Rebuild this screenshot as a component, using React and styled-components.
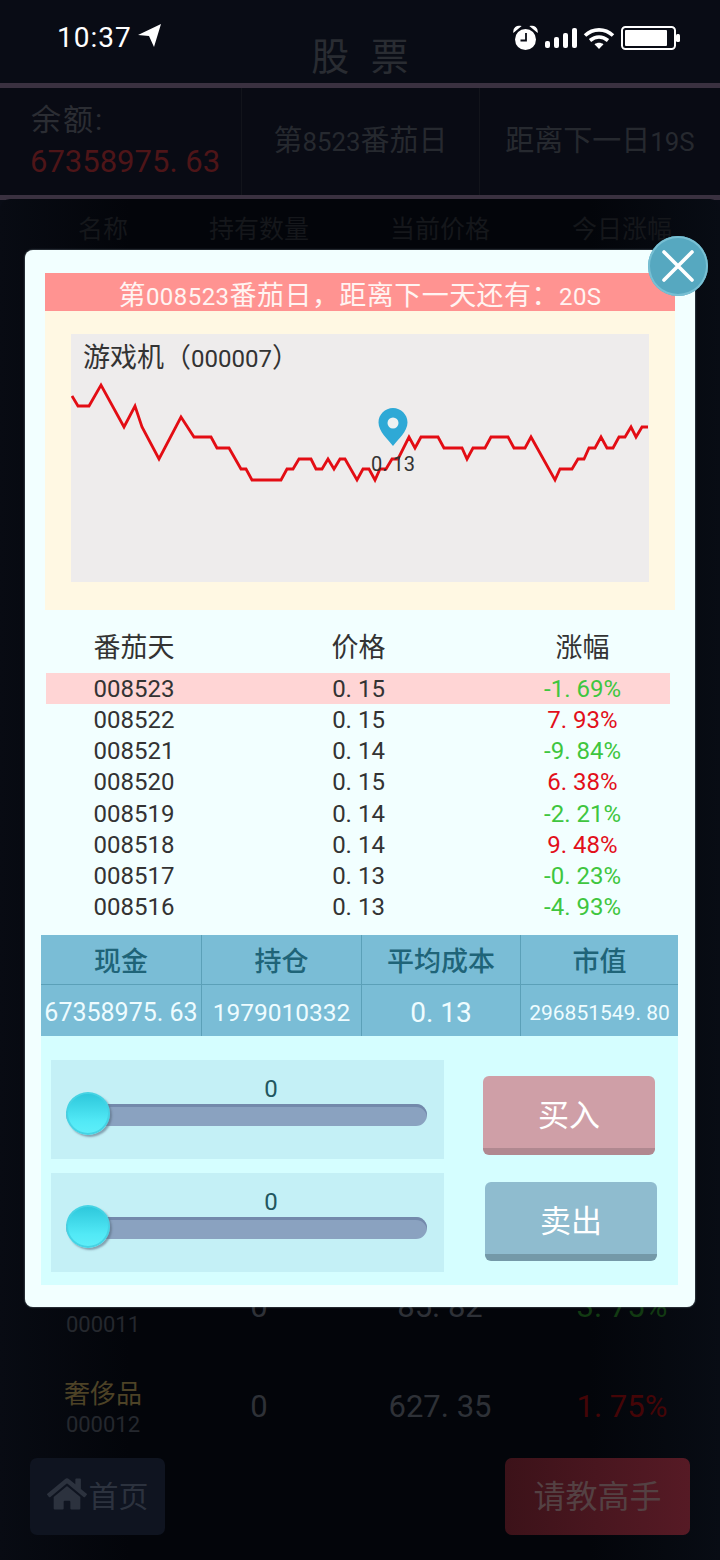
import React from 'react'
import styled, { createGlobalStyle } from 'styled-components'
import { FaHome } from 'react-icons/fa'

const history = [
  { day: '008523', price: '0. 15', change: '-1. 69%', up: false },
  { day: '008522', price: '0. 15', change: '7. 93%', up: true },
  { day: '008521', price: '0. 14', change: '-9. 84%', up: false },
  { day: '008520', price: '0. 15', change: '6. 38%', up: true },
  { day: '008519', price: '0. 14', change: '-2. 21%', up: false },
  { day: '008518', price: '0. 14', change: '9. 48%', up: true },
  { day: '008517', price: '0. 13', change: '-0. 23%', up: false },
  { day: '008516', price: '0. 13', change: '-4. 93%', up: false },
]

// traced from the chart, in panel pixels
const linePoints = [
  [1, 62], [7, 72], [18, 72], [30, 51], [53, 93], [64, 72], [71, 93], [88, 125], [110, 83], [123, 103],
  [140, 103], [146, 114], [158, 114], [170, 135], [175, 135], [181, 146], [210, 146], [216, 135], [222, 135],
  [228, 125], [240, 125], [245, 135], [251, 135], [257, 125], [263, 135], [269, 125], [274, 125], [286, 146],
  [292, 135], [298, 135], [304, 146], [309, 135], [315, 135], [321, 125], [327, 125], [338, 103], [344, 114],
  [350, 103], [367, 103], [373, 114], [391, 114], [396, 125], [402, 114], [414, 114], [420, 103], [437, 103],
  [443, 114], [454, 114], [460, 103], [484, 146], [489, 135], [501, 135], [507, 125], [513, 125], [518, 114],
  [524, 114], [530, 103], [536, 114], [542, 114], [548, 103], [554, 103], [560, 93], [565, 103], [571, 93], [577, 93],
]

const StatusIcons = () => (
  <IconRow>
    <svg width="27" height="27" viewBox="0 0 27 27">
      <circle cx="13.5" cy="15.5" r="10.5" fill="#fff" />
      <path d="M2 7.5a5 5 0 0 1 6-5zM25 7.5a5 5 0 0 0-6-5z" fill="#fff" stroke="#fff" strokeWidth="1.5" />
      <path d="M14 9v7.5H8.5" fill="none" stroke="#0a0d16" strokeWidth="1.8" />
    </svg>
    <svg width="32" height="20" viewBox="0 0 32 20">
      <rect x="0" y="13" width="5" height="7" rx="2" fill="#fff" />
      <rect x="9" y="9" width="5" height="11" rx="2" fill="#fff" />
      <rect x="18" y="5" width="5" height="15" rx="2" fill="#fff" />
      <rect x="27" y="0" width="5" height="20" rx="2" fill="#fff" />
    </svg>
    <svg width="32" height="22" viewBox="0 0 32 22">
      <path d="M2 8.5c8-7.5 20-7.5 28 0M7 13.5c5.500-4.500 12.500-4.500 18 0" fill="none" stroke="#fff" strokeWidth="3.6" />
      <path d="M11.500 17.200c2.700-2 6.300-2 9 0L16 22z" fill="#fff" />
    </svg>
    <svg width="59" height="24" viewBox="0 0 59 24">
      <rect x="1" y="1" width="53" height="22" rx="3.500" fill="none" stroke="#fff" strokeWidth="2" />
      <rect x="4" y="4" width="42" height="16" rx="1" fill="#fff" />
      <rect x="55" y="8" width="4" height="8" rx="1.500" fill="#fff" />
    </svg>
  </IconRow>
)

const PriceChart = () => (
  <ChartSvg viewBox="0 0 578 248">
    <polyline
      points={linePoints.map((p) => p.join(',')).join(' ')}
      fill="none"
      stroke="#e30d14"
      strokeWidth="2.800"
    />
    <path
      d="M322 74c-8 0-14.500 6.500-14.500 14.500 0 9 9.500 17 14.500 23.500 5-6.500 14.500-14.500 14.500-23.500C336.500 80.500 330 74 322 74z"
      fill="#2ea9d6"
    />
    <circle cx="322" cy="89" r="5.500" fill="#eef2f2" />
    <ChartLabel x="322" y="137" textAnchor="middle">0. 13</ChartLabel>
  </ChartSvg>
)

const SliderBox = () => (
  <SliderPanel>
    <SliderValue>0</SliderValue>
    <Track>
      <Thumb />
    </Track>
  </SliderPanel>
)

const App = () => {
  return (
    <>
      <GlobalStyle />
      <Page>
        <StatusBar>
          <Clock>
            10:37
            <svg width="23" height="23" viewBox="0 0 23 23">
              <polygon points="23,0 0,11 11,12 16,23" fill="#fff" />
            </svg>
          </Clock>
          <StatusIcons />
        </StatusBar>

        <TopTitle>股 票</TopTitle>
        <Bar />
        <InfoRow>
          <BalanceCell>
            <BalanceLabel>余额:</BalanceLabel>
            <BalanceValue>67358975. 63</BalanceValue>
          </BalanceCell>
          <InfoCell>第<Digits>8523</Digits>番茄日</InfoCell>
          <InfoCell>距离下一日<Digits>19S</Digits></InfoCell>
        </InfoRow>
        <Bar />

        <MarketPanel>
          <MarketHead>
            <span>名称</span>
            <span>持有数量</span>
            <span>当前价格</span>
            <span>今日涨幅</span>
          </MarketHead>
          <MarketRows>
            <MarketRow>
              <NameStack>
                <GoodsName />
                <GoodsCode>000011</GoodsCode>
              </NameStack>
              <MarketNum>0</MarketNum>
              <MarketNum>85. 82</MarketNum>
              <MarketChange $up={false}>3. 75%</MarketChange>
            </MarketRow>
            <MarketRow>
              <NameStack>
                <GoodsName>奢侈品</GoodsName>
                <GoodsCode>000012</GoodsCode>
              </NameStack>
              <MarketNum>0</MarketNum>
              <MarketNum>627. 35</MarketNum>
              <MarketChange $up={true}>1. 75%</MarketChange>
            </MarketRow>
          </MarketRows>
          <FooterRow>
            <HomeButton>
              <FaHome size={40} />
              首页
            </HomeButton>
            <AskButton>请教高手</AskButton>
          </FooterRow>
        </MarketPanel>

        <Modal>
          <CloseButton>
            <svg width="34" height="34" viewBox="0 0 34 34">
              <path d="M3 3l28 28M31 3L3 31" stroke="#fff" strokeWidth="3.600" strokeLinecap="round" />
            </svg>
          </CloseButton>
          <Banner>
            第<Digits>008523</Digits>番茄日，距离下一天还有：<Digits>20S</Digits>
          </Banner>
          <ChartWrap>
            <ChartPanel>
              <ChartTitle>
                游戏机（<Digits>000007</Digits>）
              </ChartTitle>
              <PriceChart />
            </ChartPanel>
          </ChartWrap>

          <HistoryHead>
            <span>番茄天</span>
            <span>价格</span>
            <span>涨幅</span>
          </HistoryHead>
          {history.map((row, i) => (
            <HistoryRow key={row.day} $active={i === 0}>
              <span>{row.day}</span>
              <span>{row.price}</span>
              <ChangeCell $up={row.up}>{row.change}</ChangeCell>
            </HistoryRow>
          ))}

          <StatsTable>
            <StatHead>现金</StatHead>
            <StatHead>持仓</StatHead>
            <StatHead>平均成本</StatHead>
            <StatHead>市值</StatHead>
            <StatValue $size={25}>67358975. 63</StatValue>
            <StatValue $size={24.5}>1979010332</StatValue>
            <StatValue $size={28}>0. 13</StatValue>
            <StatValue $size={21}>296851549. 80</StatValue>
          </StatsTable>

          <TradePanel>
            <SliderColumn>
              <SliderBox />
              <SliderBox />
            </SliderColumn>
            <ButtonColumn>
              <TradeButton $bg="#cf9fa7" $edge="#b08890">买入</TradeButton>
              <TradeButton $bg="#8fbccf" $edge="#7499a8" $shift={2}>卖出</TradeButton>
            </ButtonColumn>
          </TradePanel>
        </Modal>
      </Page>
    </>
  )
}

export default App

const GlobalStyle = createGlobalStyle`
  * {
    box-sizing: border-box;
  }
  body {
    margin: 0;
    background: #05070d;
    font-family: Roboto, "Noto Sans CJK SC", sans-serif;
  }
`

// * Page behind the dialog
const Page = styled.div`
  position: relative;
  width: 720px;
  height: 1560px;
  overflow: hidden;
  display: flex;
  flex-direction: column;
  background: #090c15;
`

const StatusBar = styled.div`
  position: absolute;
  top: 0;
  left: 0;
  right: 0;
  height: 60px;
  padding: 24px 40px 0 57px;
  display: flex;
  justify-content: space-between;
  align-items: flex-start;
`

const Clock = styled.div`
  display: flex;
  align-items: flex-start;
  gap: 6px;
  font-size: 28px;
  line-height: 28px;
  letter-spacing: 1px;
  color: #fff;
`

const IconRow = styled.div`
  display: flex;
  align-items: center;
  gap: 6px;
  height: 27px;
`

const TopTitle = styled.div`
  height: 83px;
  padding-top: 28px;
  text-align: center;
  font-size: 38px;
  line-height: 58px;
  word-spacing: 12px;
  color: #292c32;
`

const Bar = styled.div`
  height: 5px;
  background: #3a3140;
`

const InfoRow = styled.div`
  height: 107px;
  display: grid;
  grid-template-columns: 241px 238px 241px;
  background: #090b14;
`

const InfoCell = styled.div`
  border-left: 1px solid #12141b;
  text-align: center;
  font-size: 29px;
  line-height: 107px;
  color: #26292f;
  white-space: nowrap;
`

const BalanceCell = styled.div`
  padding: 13px 0 0 31px;
`

const BalanceLabel = styled.div`
  font-size: 30px;
  line-height: 38px;
  letter-spacing: 2px;
  color: #2b2d33;
`

const BalanceValue = styled.div`
  margin-left: -1px;
  font-size: 31px;
  line-height: 46px;
  color: #4e1518;
  white-space: nowrap;
`

const MarketPanel = styled.div`
  flex: 1;
  display: flex;
  flex-direction: column;
  margin-top: -1px;
  border-radius: 10px 10px 0 0;
  background: linear-gradient(90deg, #080b13 0%, #03050a 18%, #03050a 82%, #080c14 100%);
`

const MarketHead = styled.div`
  height: 56px;
  padding-left: 25px;
  display: grid;
  grid-template-columns: 156px 156px 206px 158px;
  align-items: center;
  justify-items: center;
  font-size: 25px;
  color: #15171b;
`

const MarketRows = styled.div`
  flex: 1;
  display: flex;
  flex-direction: column;
  justify-content: flex-end;
`

const MarketRow = styled.div`
  height: 100px;
  padding-left: 25px;
  display: grid;
  grid-template-columns: 156px 156px 206px 158px;
  align-items: center;
  justify-items: center;
`

const NameStack = styled.div`
  display: flex;
  flex-direction: column;
  align-items: center;
`

const GoodsName = styled.div`
  height: 34px;
  font-size: 26px;
  line-height: 32px;
  color: #4d4226;
`

const GoodsCode = styled.div`
  height: 26px;
  font-size: 22px;
  line-height: 26px;
  color: #25282e;
`

const MarketNum = styled.div`
  margin-top: -4px;
  font-size: 31px;
  color: #2e3137;
`

const MarketChange = styled.div`
  margin-top: -4px;
  font-size: 31px;
  color: ${(p) => (p.$up ? '#450507' : '#123a12')};
`

const FooterRow = styled.div`
  height: 102px;
  padding: 0 30px 25px;
  display: flex;
  justify-content: space-between;
`

const HomeButton = styled.div`
  width: 135px;
  padding-bottom: 6px;
  display: flex;
  align-items: center;
  justify-content: center;
  gap: 2px;
  border-radius: 7px;
  background: #0f1420;
  font-size: 30px;
  color: #2c323e;
`

const AskButton = styled.div`
  width: 185px;
  padding-bottom: 6px;
  display: flex;
  align-items: center;
  justify-content: center;
  border-radius: 7px;
  background: linear-gradient(90deg, #3c1219, #561a25);
  font-size: 32px;
  color: #544143;
`

// * Dialog
const Modal = styled.div`
  position: absolute;
  top: 250px;
  left: 25px;
  width: 670px;
  height: 1057px;
  padding: 23px 17px 0 16px;
  border-radius: 8px;
  background: #f2ffff;
  box-shadow: 0 0 2px #7f8d94;
`

const CloseButton = styled.div`
  position: absolute;
  top: -14px;
  right: -13px;
  width: 60px;
  height: 60px;
  display: flex;
  align-items: center;
  justify-content: center;
  border-radius: 50%;
  background: #56a8c0;
  box-shadow: inset 0 0 0 2px #78bfd3;
`

const Digits = styled.span`
  font-size: 0.89em;
`

const Banner = styled.div`
  height: 38px;
  margin: 0 3px 0 4px;
  text-align: center;
  font-size: 27px;
  line-height: 46px;
  letter-spacing: 0.45px;
  color: #fff4f2;
  background: #ff9391;
  overflow: hidden;
`

const ChartWrap = styled.div`
  height: 299px;
  margin: 0 3px 0 4px;
  padding: 23px 26px 0;
  background: #fff8e3;
`

const ChartPanel = styled.div`
  position: relative;
  width: 578px;
  height: 248px;
  background: #eeecec;
`

const ChartTitle = styled.div`
  position: absolute;
  top: 5px;
  left: 12px;
  font-size: 27px;
  line-height: 38px;
  color: #333;
`

const ChartSvg = styled.svg`
  display: block;
  width: 578px;
  height: 248px;
`

const ChartLabel = styled.text`
  font-family: Roboto, sans-serif;
  font-size: 20px;
  fill: #333;
`

const HistoryHead = styled.div`
  height: 63px;
  margin: 0 8px 0 5px;
  padding-top: 8px;
  display: grid;
  grid-template-columns: 176px 1fr 175px;
  align-items: center;
  justify-items: center;
  font-size: 27px;
  color: #333;
`

const HistoryRow = styled.div`
  height: 31.25px;
  margin: 0 8px 0 5px;
  display: grid;
  grid-template-columns: 176px 1fr 175px;
  align-items: center;
  justify-items: center;
  font-size: 24px;
  color: #333;
  background: ${(p) => (p.$active ? '#ffd5d5' : 'transparent')};
`

const ChangeCell = styled.span`
  color: ${(p) => (p.$up ? '#e20f1a' : '#3fc63f')};
`

const StatsTable = styled.div`
  margin-top: 12px;
  display: grid;
  grid-template-columns: 161px 160px 159px 157px;
  grid-template-rows: 50px 51px;
  background: #7abdd6;
`

const StatHead = styled.div`
  display: flex;
  align-items: center;
  justify-content: center;
  border-right: 1px solid #5ba0b8;
  border-bottom: 1px solid #5ba0b8;
  font-size: 27px;
  font-weight: 500;
  color: #1f6478;
  &:nth-child(4) {
    border-right: 0;
  }
`

const StatValue = styled.div`
  padding-top: 4px;
  display: flex;
  align-items: center;
  justify-content: center;
  border-right: 1px solid #5ba0b8;
  font-size: ${(p) => p.$size}px;
  color: #eefcff;
  white-space: nowrap;
  &:last-child {
    border-right: 0;
  }
`

const TradePanel = styled.div`
  height: 249px;
  padding: 24px 0 0 10px;
  display: flex;
  background: #d5feff;
`

const SliderColumn = styled.div`
  width: 393px;
  display: flex;
  flex-direction: column;
  gap: 14px;
`

const SliderPanel = styled.div`
  height: 99px;
  padding: 15px 17px 0 15px;
  background: #c4f0f6;
`

const SliderValue = styled.div`
  width: 410px;
  height: 28px;
  text-align: center;
  font-size: 24px;
  line-height: 28px;
  color: #22565f;
`

const Track = styled.div`
  position: relative;
  height: 22px;
  margin-top: 1px;
  border-radius: 11px;
  background: #8aa2c0;
  box-shadow: inset 0 3px 0 #7389ab;
`

const Thumb = styled.div`
  position: absolute;
  top: -12px;
  left: 0;
  width: 44px;
  height: 43px;
  border-radius: 50%;
  border: 2px solid #45d3e4;
  background: linear-gradient(180deg, #2ec8dc 0%, #52e9f6 70%, #5deef9 100%);
  box-shadow: 2px 2px 2px rgba(90, 110, 130, 0.6);
`

const ButtonColumn = styled.div`
  margin-left: 39px;
  padding-top: 16px;
  display: flex;
  flex-direction: column;
  gap: 27px;
`

const TradeButton = styled.div`
  width: 172px;
  height: 79px;
  margin-left: ${(p) => p.$shift || 0}px;
  display: flex;
  align-items: center;
  justify-content: center;
  border-radius: 6px;
  border-bottom: 7px solid ${(p) => p.$edge};
  background: ${(p) => p.$bg};
  font-size: 31px;
  color: #fff;
`
